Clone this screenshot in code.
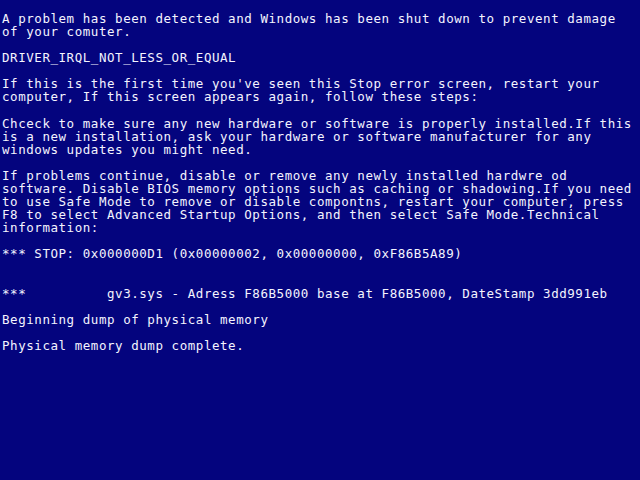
const lines = [
  "A problem has been detected and Windows has been shut down to prevent damage",
  "of your comuter.",
  "",
  "DRIVER_IRQL_NOT_LESS_OR_EQUAL",
  "",
  "If this is the first time you've seen this Stop error screen, restart your",
  "computer, If this screen appears again, follow these steps:",
  "",
  "Chceck to make sure any new hardware or software is properly installed.If this",
  "is a new installation, ask your hardware or software manufacturer for any",
  "windows updates you might need.",
  "",
  "If problems continue, disable or remove any newly installed hardwre od",
  "software. Disable BIOS memory options such as caching or shadowing.If you need",
  "to use Safe Mode to remove or disable compontns, restart your computer, press",
  "F8 to select Advanced Startup Options, and then select Safe Mode.Technical",
  "information:",
  "",
  "*** STOP: 0x000000D1 (0x00000002, 0x00000000, 0xF86B5A89)",
  "",
  "",
  "***          gv3.sys - Adress F86B5000 base at F86B5000, DateStamp 3dd991eb",
  "",
  "Beginning dump of physical memory",
  "",
  "Physical memory dump complete.",
];

export default function App() {
  return (
    <div className="w-[640px] h-[480px] overflow-hidden bg-[#04047e] pl-[2px] pt-[12px] text-[#f4f4ff] font-['DejaVu_Sans_Mono',monospace] text-[12.5px] tracking-[0.55px] leading-[13.08px]">
      {lines.map((line, i) => (
        <div key={i} className="whitespace-pre h-[13.08px]">
          {line}
        </div>
      ))}
    </div>
  );
}
